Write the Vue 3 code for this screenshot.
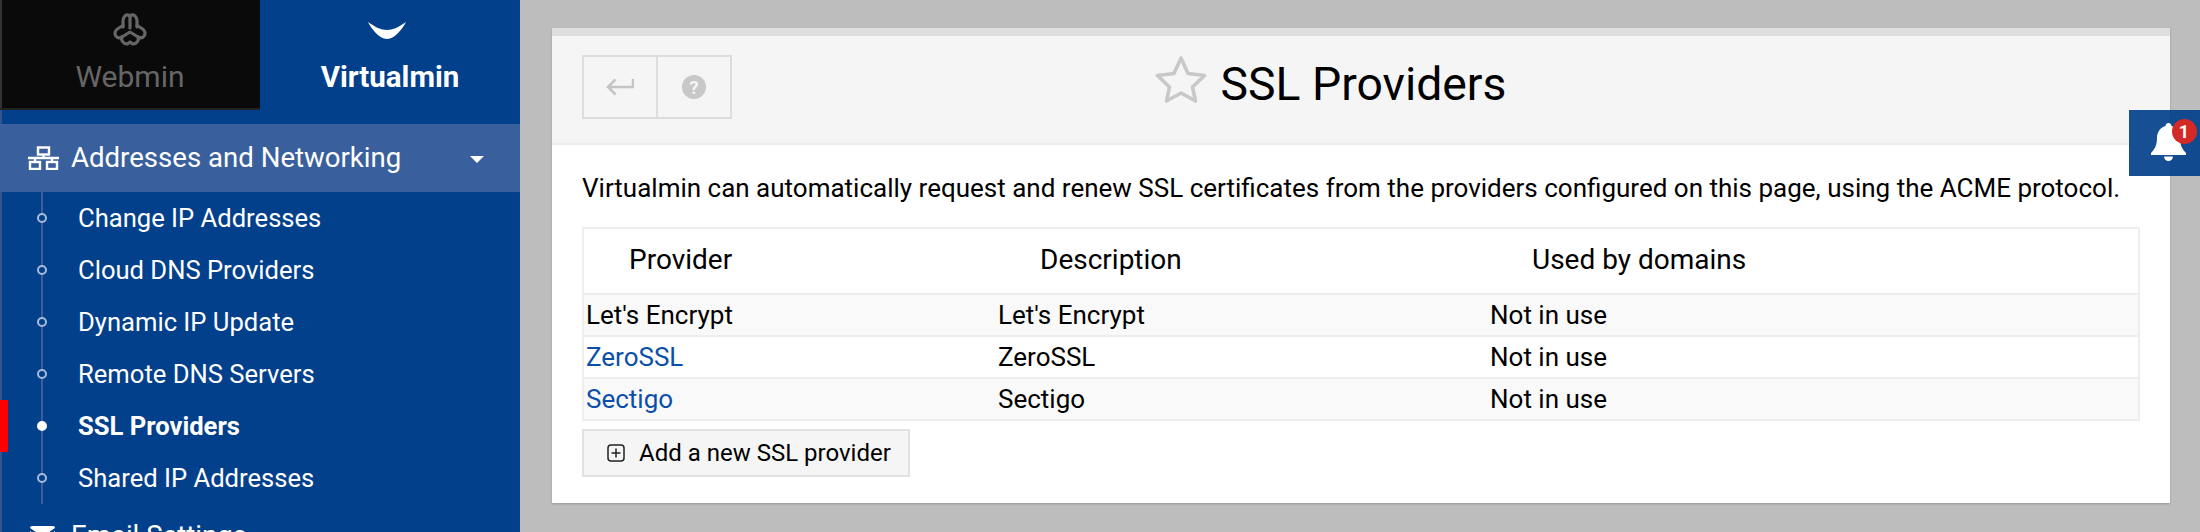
<script setup>
const links = [
  { label: 'Change IP Addresses' },
  { label: 'Cloud DNS Providers' },
  { label: 'Dynamic IP Update' },
  { label: 'Remote DNS Servers' },
  { label: 'SSL Providers', active: true },
  { label: 'Shared IP Addresses' }
]
const rows = [
  { name: "Let's Encrypt", desc: "Let's Encrypt", used: 'Not in use' },
  { name: 'ZeroSSL', desc: 'ZeroSSL', used: 'Not in use', link: true },
  { name: 'Sectigo', desc: 'Sectigo', used: 'Not in use', link: true }
]
</script>

<template>
  <div class="page">
    <aside class="side">
      <div class="tabs">
        <div class="tab tab-dark">
          <svg class="logo-w" viewBox="0 0 34 33" fill="none" stroke="#666" stroke-width="3.200" stroke-linejoin="round" stroke-linecap="round">
            <path d="M10 14V8C10 4 12.500 1.800 14.500 1.800 16 1.800 17 3 17 4 17 3 18 1.800 19.500 1.800 21.500 1.800 24 4 24 8V14"/>
            <path d="M17 4V15"/>
            <path d="M10 12.500 5 15.500C2 17.500 1.300 20.500 2.800 22.800 4.300 25 7 25 9 24L17 19 25 24C27 25 29.700 25 31.200 22.800 32.700 20.500 32 17.500 29 15.500L24 12.500"/>
            <path d="M9 24 8.500 26C9 30 13 31.500 15 30.500L17 29 19 30.500C21 31.500 25 30 25.500 26L25 24"/>
          </svg>
          <span>Webmin</span>
        </div>
        <div class="tab tab-blue">
          <svg class="logo-v" viewBox="0 0 38 17"><path d="M0 0C7 5 13 8 19 8S31 5 38 0C35 6 27 17 19 17S3 6 0 0z" fill="#fff"/></svg>
          <span>Virtualmin</span>
        </div>
      </div>
      <div class="group-open">
        <svg class="net" viewBox="0 0 31 24" fill="none" stroke="#fff" stroke-width="2.400">
          <rect x="10" y="1.500" width="11" height="7"/>
          <rect x="2" y="16" width="10" height="7"/>
          <rect x="19" y="16" width="10" height="7"/>
          <path d="M15.500 8.500V12M0 12H31M7 12V16M24 12V16"/>
        </svg>
        <span class="group-label">Addresses and Networking</span>
        <span class="caret"></span>
      </div>
      <ul class="links">
        <li v-for="l in links" :key="l.label" :class="{ on: l.active }">
          <span class="dot"></span>{{ l.label }}
        </li>
      </ul>
      <div class="group-next">
        <svg class="mail" viewBox="0 0 25 19"><path d="M0 2a2 2 0 0 1 2-2h21a2 2 0 0 1 2 2L12.500 10.500zM0 5v12a2 2 0 0 0 2 2h21a2 2 0 0 0 2-2V5L12.500 13.500z" fill="#fff"/></svg>
        <span>Email Settings</span>
      </div>
    </aside>

    <main class="main">
      <section class="panel">
        <header class="head">
          <div class="btns">
            <button class="btn">
              <svg width="28" height="18" viewBox="0 0 28 18" fill="none" stroke="#c4c4c4" stroke-width="2.500"><path d="M27 1V9H2M9.500 1.500 2 9l7.500 7.500"/></svg>
            </button>
            <button class="btn">
              <svg width="24" height="24" viewBox="0 0 24 24"><circle cx="12" cy="12" r="12" fill="#c8c8c8"/><text x="12" y="18.500" text-anchor="middle" class="qm">?</text></svg>
            </button>
          </div>
          <div class="title">
            <svg class="star" viewBox="0 0 52 49" fill="none" stroke="#c8c8c8" stroke-width="3.600" stroke-linejoin="round"><path d="M26 3 33 18.500 49.500 20.500 37.500 32 40.500 46 26 38 11.500 46 14.500 32 2.500 20.500 19 18.500z"/></svg>
            <h1>SSL Providers</h1>
          </div>
        </header>
        <div class="body">
          <p class="intro">Virtualmin can automatically request and renew SSL certificates from the providers configured on this page, using the ACME protocol.</p>
          <table class="tbl">
            <thead>
              <tr><th class="c1">Provider</th><th class="c2">Description</th><th>Used by domains</th></tr>
            </thead>
            <tbody>
              <tr v-for="r in rows" :key="r.name">
                <td><a v-if="r.link" href="#">{{ r.name }}</a><template v-else>{{ r.name }}</template></td>
                <td>{{ r.desc }}</td>
                <td>{{ r.used }}</td>
              </tr>
            </tbody>
          </table>
          <button class="add">
            <svg width="18" height="18" viewBox="0 0 18 18" fill="none" stroke="#222" stroke-width="1.500"><rect x="1" y="1" width="16" height="16" rx="3"/><path d="M9 4.500v9M4.500 9h9"/></svg>
            Add a new SSL provider
          </button>
        </div>
      </section>
    </main>

    <div class="bell">
      <svg width="35" height="38" viewBox="0 0 35 38"><path d="M17.500 0C15.500 0 14.500 1.500 14.500 3 9 4.500 6 9.500 6 15c0 8-3 12-6 15v2h35v-2c-3-3-6-7-6-15 0-5.500-3-10.500-8.500-12 0-1.500-1-3-3-3zM13 33.500c0 2.500 2 4.500 4.500 4.500s4.500-2 4.500-4.500z" fill="#fff"/></svg>
      <span class="badge">1</span>
    </div>
  </div>
</template>

<style>
html, body { margin: 0; background: #bdbdbd; }
</style>

<style scoped>
.page {
  position: relative;
  display: flex;
  width: 2200px;
  height: 532px;
  overflow: hidden;
  font-family: Roboto, sans-serif;
  background: #bdbdbd;
  color: #000;
}
.side {
  width: 518px;
  flex: none;
  border-left: 2px solid #34568f;
  background: #03408c;
  color: #fff;
}
.tabs { display: flex; height: 110px; margin-bottom: 14px; margin-left: -2px; }
.tab {
  width: 260px;
  display: flex;
  flex-direction: column;
  align-items: center;
  font-size: 30px;
  line-height: 32px;
}
.tab-dark {
  height: 95px;
  padding-top: 13px;
  box-sizing: content-box;
  background: #0a0a0a;
  color: #666;
  border-bottom: 2px solid #222;
  box-shadow: inset 2px 0 #333;
}
.tab-blue { font-weight: 700; font-size: 29.500px; padding-top: 22px; }
.logo-w { width: 34px; height: 33px; margin-bottom: 15px; }
.logo-v { width: 38px; height: 17px; margin-bottom: 22px; margin-right: 6px; }
.group-open {
  display: flex;
  align-items: center;
  height: 66px;
  padding-bottom: 2px;
  margin-left: -2px;
  padding-left: 28px;
  background: #3a5f9d;
  font-size: 27.600px;
}
.net { width: 31px; height: 24px; margin-right: 12px; margin-top: 2px; }
.group-label { flex: 1; }
.caret {
  width: 0; height: 0;
  margin-right: 36px;
  margin-top: 4px;
  border-left: 7px solid transparent;
  border-right: 7px solid transparent;
  border-top: 7px solid #fff;
}
.links {
  list-style: none;
  margin: 0;
  padding: 0;
  position: relative;
}
.links::before {
  content: "";
  position: absolute;
  left: 39px; top: 0; bottom: 0;
  width: 2px;
  background: #3a5f9d;
}
.links li {
  position: relative;
  height: 52px;
  line-height: 52px;
  padding-left: 76px;
  font-size: 25.600px;
}
.dot {
  position: absolute;
  left: 35px; top: 21px;
  width: 10px; height: 10px;
  box-sizing: border-box;
  border: 2px solid #a9bbd6;
  border-radius: 50%;
  background: #03408c;
}
.links li.on { font-weight: 700; }
.links li.on .dot { background: #fff; border-color: #fff; }
.links li.on::before {
  content: "";
  position: absolute;
  left: -2px; top: 0;
  width: 8px; height: 52px;
  background: #f00;
}
.group-next {
  display: flex;
  align-items: center;
  padding-left: 28px;
  height: 62px;
  font-size: 27.600px;
}
.mail { width: 25px; height: 19px; margin-right: 16px; }
.main { flex: 1; padding: 28px 30px 0 32px; min-width: 0; }
.panel {
  height: 475px;
  background: #fff;
  border-top: 8px solid #dedede;
  box-sizing: border-box;
  box-shadow: 0 1px 2px rgba(0, 0, 0, .2);
}
.head {
  position: relative;
  display: flex;
  padding: 19px 0 0 30px;
  box-sizing: border-box;
  height: 109px;
  background: #f5f5f5;
  border-bottom: 2px solid #eee;
}
.btns { display: flex; width: 150px; height: 64px; border: 2px solid #ddd; box-sizing: border-box; }
.btn {
  width: 72px;
  padding: 0;
  background: transparent;
  border: 0;
  display: flex; align-items: center; justify-content: center;
}
.btn + .btn { width: 74px; border-left: 2px solid #ddd; }
.qm { font: 700 19px Roboto, sans-serif; fill: #f5f5f5; }
.title {
  position: absolute;
  left: 0; right: 0; top: 0; bottom: 0;
  padding: 0 61px 12px 0;
  display: flex; align-items: center; justify-content: center;
  gap: 14px;
}
.star { width: 52px; height: 49px; margin-top: -8px; }
h1 { margin: 0; font-size: 46.300px; font-weight: 400; }
.body { padding: 24px 30px 0; }
.intro { margin: 0; font-size: 26px; line-height: 38px; white-space: nowrap; }
.tbl {
  width: 100%;
  margin-top: 20px;
  border-collapse: collapse;
  border: 2px solid #eee;
  font-size: 26px;
  table-layout: fixed;
}
.tbl th {
  height: 61px;
  padding: 0 0 3px 45px;
  font-size: 28px;
  font-weight: 400;
  text-align: left;
  border-bottom: 2px solid #eee;
}
.tbl th.c1 { width: 366px; }
.tbl th.c2 { width: 447px; }
.tbl td { height: 40px; padding: 0 3px; border-bottom: 2px solid #eee; }
.tbl td:first-child { padding-left: 2px; }
.tbl tbody tr:nth-child(odd) { background: #f9f9f9; }
.tbl a { color: #0b4fa8; text-decoration: none; }
.add {
  display: flex; align-items: center; gap: 14px;
  margin-top: 8px;
  height: 48px;
  width: 328px;
  padding: 0 0 0 23px;
  background: #f5f5f5;
  border: 2px solid #e2e2e2;
  font: 400 24px Roboto, sans-serif;
  color: #000;
}
.bell {
  position: absolute;
  left: 2129px; top: 110px;
  width: 63px; height: 64px;
  padding: 0 0 2px 8px;
  display: flex; align-items: center; justify-content: center;
  background: rgba(3, 64, 140, .92);
}
.badge {
  position: absolute;
  right: 3.500px; top: 8.500px;
  width: 25px; height: 25px;
  border-radius: 50%;
  background: #d32a26;
  color: #fff;
  font-weight: 700;
  font-size: 18px;
  line-height: 25px;
  text-align: center;
}
</style>
